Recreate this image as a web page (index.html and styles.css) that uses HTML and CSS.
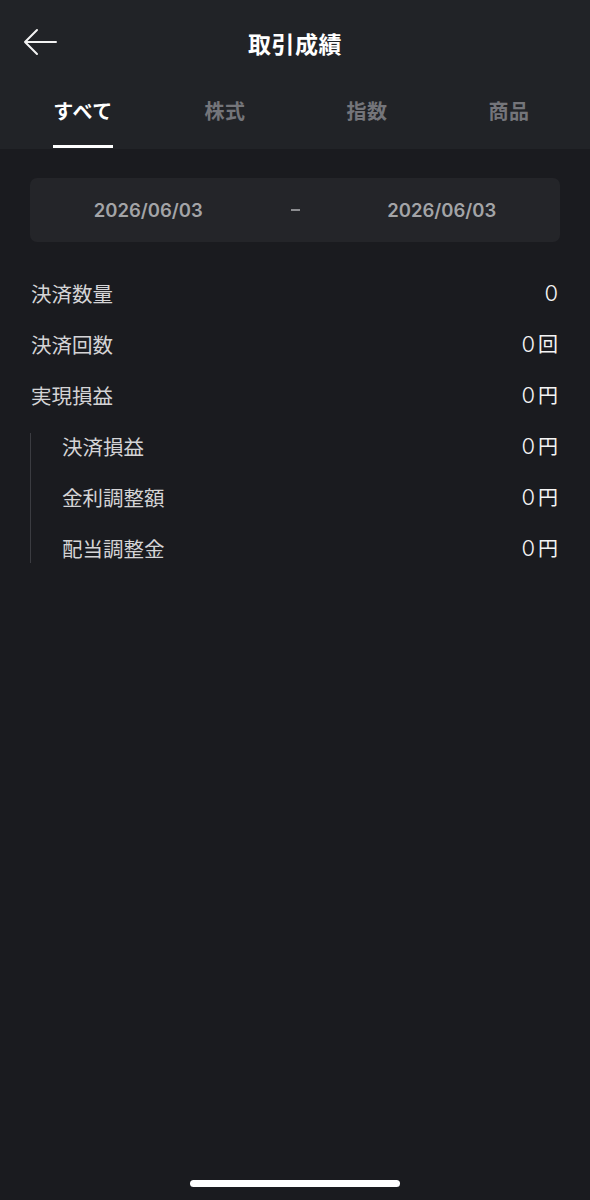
FILE: index.html
```html
<!DOCTYPE html>
<html lang="ja">
<head>
    <meta charset="UTF-8">
    <meta name="viewport" content="width=device-width, initial-scale=1.0">
    <title>取引成績</title>
    <link rel="stylesheet" href="styles.css">
</head>
<body>
    <div class="header">
        <div class="title-bar">
            <button class="back-btn" aria-label="戻る">
                <svg width="34" height="28" viewBox="0 0 34 28">
                    <path d="M33 14H2M14 2L2 14L14 26" fill="none" stroke="#f2f2f2" stroke-width="2" stroke-linecap="round" stroke-linejoin="round"/>
                </svg>
            </button>
            <div class="title">取引成績</div>
        </div>
        <div class="tabs">
            <div class="tab active"><span>すべて</span></div>
            <div class="tab"><span>株式</span></div>
            <div class="tab"><span>指数</span></div>
            <div class="tab"><span>商品</span></div>
        </div>
    </div>

    <div class="content">
        <div class="date-range">
            <div class="date">2026/06/03</div>
            <div class="dash"></div>
            <div class="date">2026/06/03</div>
        </div>

        <div class="stats">
            <div class="row">
                <span class="label">決済数量</span>
                <span class="value">0</span>
            </div>
            <div class="row">
                <span class="label">決済回数</span>
                <span class="value">0<small>回</small></span>
            </div>
            <div class="row">
                <span class="label">実現損益</span>
                <span class="value">0<small>円</small></span>
            </div>
            <div class="sub-group">
                <div class="row">
                    <span class="label">決済損益</span>
                    <span class="value">0<small>円</small></span>
                </div>
                <div class="row">
                    <span class="label">金利調整額</span>
                    <span class="value">0<small>円</small></span>
                </div>
                <div class="row">
                    <span class="label">配当調整金</span>
                    <span class="value">0<small>円</small></span>
                </div>
            </div>
        </div>
    </div>

    <div class="home-indicator"></div>
</body>
</html>
```

FILE: styles.css
```css
body {
    margin: 0;
    width: 590px;
    height: 1200px;
    background-color: #1a1b1f;
    font-family: "Noto Sans CJK JP", "Noto Sans", sans-serif;
    color: #f2f2f2;
    display: flex;
    flex-direction: column;
    overflow: hidden;
}
.header {
    background-color: #212327;
    height: 149px;
}
.title-bar {
    height: 86px;
    display: flex;
    align-items: center;
    justify-content: center;
    position: relative;
}
.back-btn {
    position: absolute;
    left: 23px;
    top: 28px;
    background: none;
    border: none;
    padding: 0;
    display: flex;
}
.title {
    font-size: 23px;
    font-weight: 700;
    color: #ffffff;
    letter-spacing: 0.5px;
}
.tabs {
    display: flex;
    padding: 0 10px 0 12px;
    height: 63px;
}
.tab {
    flex: 1;
    display: flex;
    justify-content: center;
}
.tab span {
    font-size: 20px;
    font-weight: 700;
    color: #74757a;
    line-height: 1;
    padding-top: 15px;
    height: 44px;
    box-sizing: content-box;
    border-bottom: 3px solid transparent;
    letter-spacing: 0.5px;
}
.tab.active span {
    color: #ffffff;
    border-bottom-color: #ffffff;
}
.content {
    flex: 1;
    padding: 29px 30px 0 30px;
}
.date-range {
    height: 64px;
    background-color: #242529;
    border-radius: 7px;
    display: flex;
    align-items: center;
}
.date {
    flex: 1;
    text-align: center;
    font-family: "Inter", "Liberation Sans", sans-serif;
    font-size: 18.5px;
    font-weight: 600;
    color: #a3a4a7;
}
.dash {
    width: 9px;
    height: 2px;
    margin: 0 24px;
    background-color: #8c8d90;
}
.stats {
    margin-top: 25px;
}
.row {
    height: 51px;
    display: flex;
    align-items: center;
    justify-content: space-between;
    padding-left: 1px;
}
.label {
    font-size: 20.5px;
    color: #d4d4d6;
}
.value {
    font-family: "Inter", "Noto Sans CJK JP", sans-serif;
    font-size: 22px;
    font-weight: 300;
    color: #f4f4f4;
    display: flex;
    align-items: center;
    margin-right: 2px;
}
.value small {
    font-family: "Noto Sans CJK JP", sans-serif;
    font-size: 20px;
    font-weight: 400;
    margin-left: 3px;
}
.sub-group {
    position: relative;
    padding-left: 31px;
}
.sub-group::before {
    content: "";
    position: absolute;
    left: 0;
    top: 13px;
    bottom: 10px;
    border-left: 1px solid #3b3c41;
}
.home-indicator {
    position: absolute;
    left: 190px;
    top: 1180px;
    width: 210px;
    height: 7px;
    border-radius: 4px;
    background-color: #ffffff;
}
```
